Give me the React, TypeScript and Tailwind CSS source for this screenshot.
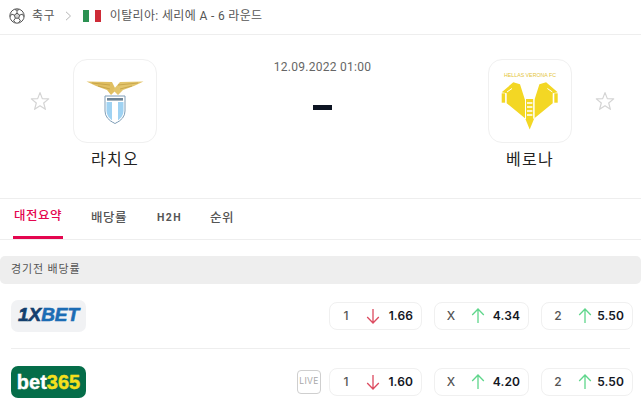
import React from "react";

const KR = "font-['Roboto','Noto_Sans_CJK_KR',sans-serif]";

function Star() {
  return (
    <svg width="20" height="20" viewBox="0 0 20 20" fill="none" stroke="#d4d4d4" strokeWidth="1.2" strokeLinejoin="round">
      <path d="M10 1.6 12.3 7.6 18.7 7.9 13.7 12 15.4 18.3 10 14.8 4.6 18.3 6.3 12 1.3 7.9 7.7 7.6Z" />
    </svg>
  );
}

function Ball() {
  return (
    <svg width="16" height="16" viewBox="0 0 16 16" fill="none" stroke="#555" strokeWidth="1">
      <circle cx="8" cy="8" r="7.2" />
      <path d="M8 5.2 10.7 7.1 9.7 10.2H6.3L5.3 7.1Z" fill="#555" fillOpacity=".25" />
      <path d="M8 5.2V2.2M10.7 7.1 13.6 6M9.7 10.2 11.4 12.8M6.3 10.2 4.6 12.8M5.3 7.1 2.4 6" />
      <path d="M5.7 1.6 8 2.2 10.3 1.6M13.6 6 14.6 8.6M11.4 12.8 9.4 14.6M4.6 12.8 6.6 14.6M2.4 6 1.4 8.6" />
    </svg>
  );
}

function Lazio() {
  return (
    <svg width="70" height="50" viewBox="0 0 70 50" className="mt-[-2px]">
      <path d="M6.5 6.5 L32 7 L36 15 L31 20 L27 15 Q17 12 6.5 6.5Z" fill="#e0bf62" />
      <path d="M63.5 6.5 L40 7 L33 15 L38 20 L43 15 Q53 12 63.5 6.5Z" fill="#e3c56c" />
      <path d="M12 8 L30 10M38 10 L58 8M18 11 L30 14M40 14 L52 11" stroke="#bd9a3f" strokeWidth=".7" fill="none" />
      <path d="M25 21H45V36Q45 44 35 48.5Q25 44 25 36Z" fill="#fff" stroke="#7e9db6" strokeWidth="1" />
      <path d="M26.5 27H43.5V36Q43.5 43 35 47Q26.5 43 26.5 36Z" fill="#9fd2f2" />
      <path d="M32 27H38V46L35 47.5 32 46Z" fill="#ffffff" />
      <rect x="27" y="23" width="16" height="2.6" fill="#6f8596" />
    </svg>
  );
}

function Verona() {
  return (
    <svg width="70" height="70" viewBox="0 0 70 70" className="mt-[-2px]">
      <text x="35" y="12" textAnchor="middle" fontSize="5.6" fill="#e4c53a" fontFamily="Liberation Sans, sans-serif" textLength="52" lengthAdjust="spacingAndGlyphs">HELLAS VERONA FC</text>
      <path d="M6.7 27.3 18.3 17.3 25 19.3 30 35V53.3L11.7 38.3V28.3Z" fill="#f3d724" />
      <path d="M62.7 27.3 51.1 17.3 44.4 19.3 39.4 35V53.3L57.7 38.3V28.3Z" fill="#f3d724" />
      <path d="M30 53 34.7 64.5 39.4 53Z" fill="#f3d724" />
      <rect x="6.7" y="28.3" width="3.4" height="9.4" fill="#f3d724" />
      <rect x="59.3" y="28.3" width="3.4" height="9.4" fill="#f3d724" />
      <path d="M31 34H38.4V54H31Z" fill="#f3d724" />
      <path d="M30.5 34V54M38.9 34V54" stroke="#fff" strokeWidth="1" fill="none" />
      <path d="M32 38h5.4M32 42h5.4M32 46h5.4M32 50h5.4" stroke="#fff" strokeWidth="1.3" fill="none" />
      <path d="M12 27 17 23.5M57.4 27 52.4 23.5" stroke="#fff" strokeWidth="1" />
    </svg>
  );
}

function Down() {
  return (
    <svg width="16" height="18" viewBox="0 0 16 18" fill="none" stroke="#dc4a5f" strokeWidth="1.3">
      <path d="M8 2V16M2.2 10 8 16 13.8 10" />
    </svg>
  );
}

function Up() {
  return (
    <svg width="16" height="18" viewBox="0 0 16 18" fill="none" stroke="#5fd68b" strokeWidth="1.3">
      <path d="M8 16V2M2.2 8 8 2 13.8 8" />
    </svg>
  );
}

function Odd({ label, up, value, width }: { label: string; up: boolean; value: string; width: string }) {
  return (
    <div className={`${width} h-[28px] flex items-center border border-[#f0f0f0] rounded-lg pl-[10px] pr-[8px] font-['Inter',sans-serif] text-[12px] font-medium`}>
      <span className="w-[12px] text-[#555] text-center">{label}</span>
      <span className="ml-[13px]">{up ? <Up /> : <Down />}</span>
      <span className="ml-auto text-[#14171f] font-semibold tracking-[0.1px]">{value}</span>
    </div>
  );
}

function Team({ name, children }: { name: string; children: React.ReactNode }) {
  return (
    <div className="flex flex-col items-center">
      <div className="w-[84px] h-[84px] border border-[#f0f0f0] rounded-[14px] flex items-center justify-center">{children}</div>
      <div className="mt-[6px] text-[16px] tracking-[1.2px] leading-[22px] text-[#222]">{name}</div>
    </div>
  );
}

function Row({ logo, live, odds, border }: { logo: React.ReactNode; live?: boolean; odds: [string, boolean, string, string][]; border?: boolean }) {
  return (
    <div className={`mx-[11px] h-[65px] flex items-center ${border ? "border-b border-[#eeeeee]" : ""}`}>
      {logo}
      <div className="ml-auto flex items-center mr-[-3px]">
        {live && (
          <div className="mr-[8px] w-[24px] h-[24px] border border-[#cfcfcf] rounded-[4px] flex items-center justify-center text-[8.5px] text-[#a8a8a8] font-['Inter',sans-serif] tracking-[0.3px]">LIVE</div>
        )}
        <div className="flex gap-[12px]">
          {odds.map((o) => (
            <Odd key={o[0]} label={o[0]} up={o[1]} value={o[2]} width={o[3]} />
          ))}
        </div>
      </div>
    </div>
  );
}

export default function App() {
  return (
    <div className={`w-[641px] h-[408px] overflow-hidden bg-white ${KR}`}>
      <div className="h-[35px] border-b border-[#eeeeee] flex items-center pl-[9px] pb-[2px] text-[12px] tracking-[0.35px] text-[#555]">
        <Ball />
        <span className="ml-[7px]">축구</span>
        <svg className="ml-[10px]" width="7" height="10" viewBox="0 0 7 10" fill="none" stroke="#b5b5b5" strokeWidth="1">
          <path d="M1 .8 5.5 5 1 9.2" />
        </svg>
        <div className="ml-[11px] w-[18px] h-[12px] flex">
          <div className="flex-1 bg-[#2b9152]" />
          <div className="flex-1 bg-white" />
          <div className="flex-1 bg-[#ce2b37]" />
        </div>
        <span className="ml-[9px]">이탈리아: 세리에 A - 6 라운드</span>
      </div>

      <div className="h-[164px] border-b border-[#eeeeee] flex items-start pt-[24px] pl-[30px] pr-[26px]">
        <div className="mt-[32px]"><Star /></div>
        <div className="ml-[23px]">
          <Team name="라치오"><Lazio /></Team>
        </div>
        <div className="flex-1 flex flex-col items-center pt-[1px]">
          <div className="text-[12px] tracking-[0.28px] leading-[14px] text-[#666]">12.09.2022 01:00</div>
          <div className="mt-[31px] w-[19px] h-[5px] bg-[#0d1422]" />
        </div>
        <div className="mr-[23px]">
          <Team name="베로나"><Verona /></Team>
        </div>
        <div className="mt-[32px]"><Star /></div>
      </div>

      <div className="h-[41px] border-b border-[#eeeeee] flex pl-[13px] text-[12.5px] font-medium tracking-[0.5px]">
        <div className="w-[50px] h-[40px] border-b-[3px] border-[#e4064f] text-[#e4064f] flex items-center justify-center pb-[2px] whitespace-nowrap">대전요약</div>
        <div className="ml-[28px] h-[40px] text-[#555] flex items-center pb-[2px]">배당률</div>
        <div className="ml-[30px] h-[40px] text-[#555] flex items-center pb-[2px] text-[10.5px] font-bold tracking-[1.4px]">H2H</div>
        <div className="ml-[28px] h-[40px] text-[#555] flex items-center pb-[2px]">순위</div>
      </div>

      <div className="mt-[16px] h-[28px] bg-[#eeeeee] rounded-[5px] flex items-center pl-[11px] text-[11px] tracking-[0.85px] text-[#555]">경기전 배당률</div>

      <Row
        border
        logo={
          <div className="w-[75px] h-[32px] mt-[-1px] rounded-[7px] bg-[#f1f2f4] flex items-center justify-center font-['Liberation_Sans',sans-serif] italic font-bold text-[19px] [-webkit-text-stroke:0.6px_currentColor] text-[#1c6cb4]">
            <span className="text-[#133f6e]">1X</span>BET
          </div>
        }
        odds={[
          ["1", false, "1.66", "w-[93px]"],
          ["X", true, "4.34", "w-[95px]"],
          ["2", true, "5.50", "w-[92px]"],
        ]}
      />
      <Row
        live
        logo={
          <div className="w-[75px] h-[32px] rounded-[7px] bg-[#056d49] flex items-center justify-center font-['Liberation_Sans',sans-serif] font-bold text-[20px] [-webkit-text-stroke:0.4px_currentColor] text-white">
            bet<span className="text-[#f5e01c]">365</span>
          </div>
        }
        odds={[
          ["1", false, "1.60", "w-[93px]"],
          ["X", true, "4.20", "w-[95px]"],
          ["2", true, "5.50", "w-[92px]"],
        ]}
      />
    </div>
  );
}
